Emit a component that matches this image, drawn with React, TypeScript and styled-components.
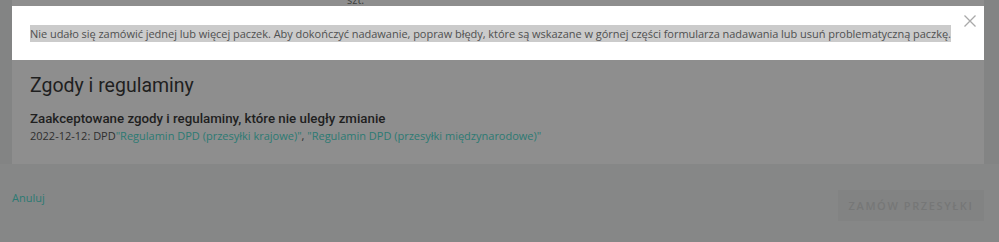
import React from 'react';
import styled, { createGlobalStyle } from 'styled-components';

const GlobalStyle = createGlobalStyle`
  html, body {
    margin: 0;
    padding: 0;
  }
  body {
    background: #868787;
    font-family: 'Open Sans', 'Liberation Sans', sans-serif;
    overflow: hidden;
  }
`;

const Page = styled.div`
  position: relative;
  width: 999px;
  height: 242px;
  overflow: hidden;
`;

const TopArea = styled.div`
  background: #838484;
  padding: 0 15px 0 12px;
`;

const Card = styled.section`
  background: #8e8e8e;
  padding: 0 18px 21px 18px;
`;

const QtyRow = styled.div`
  height: 7px;
  overflow: hidden;
  display: flex;
  align-items: flex-end;
  padding-left: 317px;
  font-size: 11px;
  line-height: 14px;
  color: #3c3d3d;
`;

const Heading = styled.h2`
  margin: 67px 0 0;
  font-family: Roboto, 'Liberation Sans', sans-serif;
  font-weight: 400;
  font-size: 19.5px;
  line-height: 23px;
  color: #1f1f1f;
`;

const SubHeading = styled.h3`
  margin: 12px 0 0;
  font-family: Roboto, 'Liberation Sans', sans-serif;
  font-weight: 500;
  font-size: 13.3px;
  line-height: 19px;
  color: #1f1f1f;
`;

const ConsentLine = styled.div`
  font-size: 11px;
  line-height: 15px;
  color: #2e2f2f;
`;

const ConsentLink = styled.a`
  color: #2c7a73;
  text-decoration: none;
`;

const Footer = styled.div`
  display: flex;
  justify-content: space-between;
  align-items: flex-start;
  padding: 26px 15px 0 12px;
`;

const CancelLink = styled.a`
  font-size: 11px;
  line-height: 16px;
  color: #2c7a73;
  text-decoration: none;
`;

const SubmitButton = styled.button`
  width: 146px;
  height: 31px;
  border: none;
  background: #828383;
  color: #767777;
  font-family: 'Open Sans', 'Liberation Sans', sans-serif;
  font-size: 11px;
  font-weight: 600;
  letter-spacing: 1.6px;
  text-transform: uppercase;
  padding: 0;
`;

const Toast = styled.div`
  position: absolute;
  top: 6px;
  left: 12px;
  right: 15px;
  height: 54px;
  background: #ffffff;
  padding: 18px 18px 0 18px;
  box-sizing: border-box;
  line-height: 17px;
`;

const ToastText = styled.span`
  font-size: 11px;
  letter-spacing: -0.035px;
  padding: 1px 0;
  color: #4f5050;
  background: #cbcbcb;
`;

const CloseButton = styled.button`
  position: absolute;
  top: 9px;
  right: 8px;
  width: 12px;
  height: 12px;
  padding: 0;
  border: none;
  background: none;
  display: flex;
`;

function CloseIcon() {
  return (
    <svg width="12" height="12" viewBox="0 0 12 12">
      <path d="M0.5 0.5 L11.5 11.5 M11.5 0.5 L0.5 11.5" stroke="#a9a9a9" strokeWidth="1.3" fill="none" />
    </svg>
  );
}

export default function App() {
  return (
    <Page>
      <GlobalStyle />
      <TopArea>
        <Card>
          <QtyRow>szt.</QtyRow>
          <Heading>Zgody i regulaminy</Heading>
          <SubHeading>Zaakceptowane zgody i regulaminy, które nie uległy zmianie</SubHeading>
          <ConsentLine>
            2022-12-12: DPD
            <ConsentLink href="#">"Regulamin DPD (przesyłki krajowe)"</ConsentLink>,{' '}
            <ConsentLink href="#">"Regulamin DPD (przesyłki międzynarodowe)"</ConsentLink>
          </ConsentLine>
        </Card>
      </TopArea>
      <Footer>
        <CancelLink href="#">Anuluj</CancelLink>
        <SubmitButton disabled>Zamów przesyłki</SubmitButton>
      </Footer>
      <Toast>
        <ToastText>
          Nie udało się zamówić jednej lub więcej paczek. Aby dokończyć nadawanie, popraw błędy, które są wskazane w
          górnej części formularza nadawania lub usuń problematyczną paczkę.
        </ToastText>
        <CloseButton aria-label="Zamknij">
          <CloseIcon />
        </CloseButton>
      </Toast>
    </Page>
  );
}
